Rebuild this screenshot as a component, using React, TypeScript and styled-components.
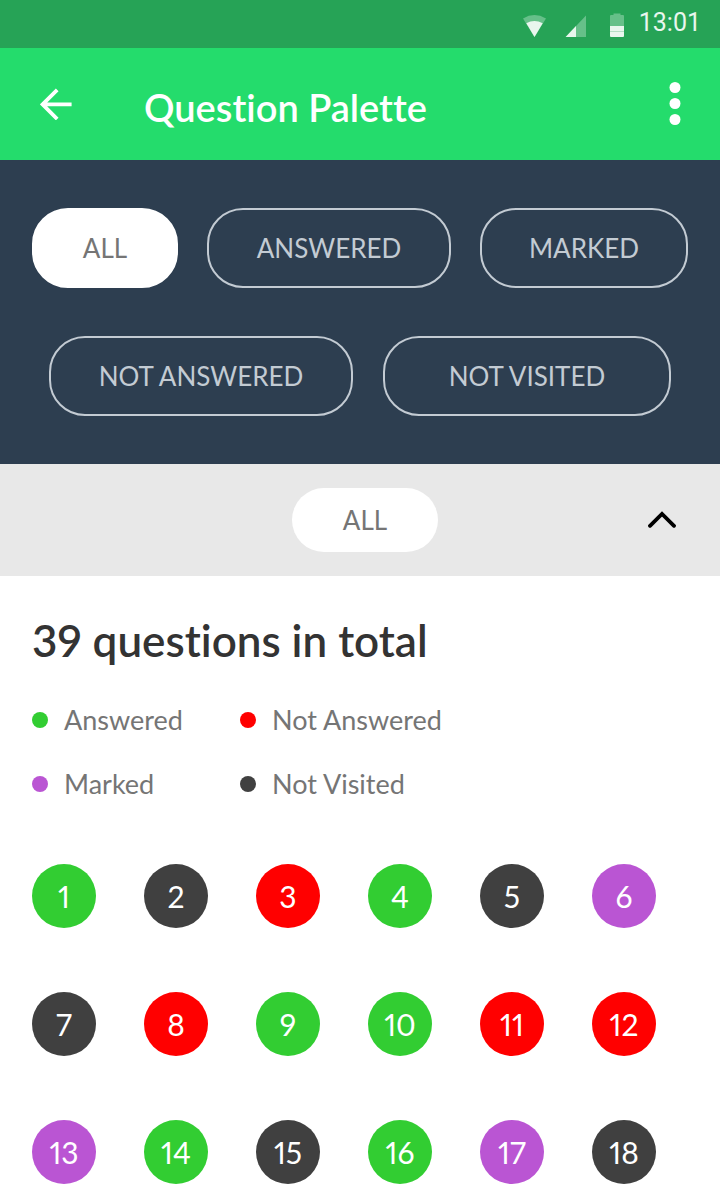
import { useState } from 'react';
import styled, { createGlobalStyle } from 'styled-components';

type Status = 'answered' | 'notAnswered' | 'marked' | 'notVisited';

const statusColor: Record<Status, string> = {
  answered: '#32cd32',
  notAnswered: '#ff0000',
  marked: '#ba55d3',
  notVisited: '#404040',
};

const GlobalStyle = createGlobalStyle`
  *, *::before, *::after { box-sizing: border-box; }
  body {
    margin: 0;
    background: #ffffff;
    font-family: Lato, "Liberation Sans", sans-serif;
    font-variant-ligatures: none;
    font-variant-numeric: proportional-nums;
  }
  button { font-family: inherit; font-variant-numeric: inherit; cursor: pointer; }
`;

const Page = styled.div`
  display: flex;
  flex-direction: column;
  min-height: 100vh;
`;

const StatusBar = styled.div`
  display: flex;
  align-items: center;
  justify-content: flex-end;
  gap: 10px;
  height: 48px;
  padding: 0 19px;
  background: #26a356;
`;

const StatusIcons = styled.div`
  display: flex;
  gap: 17px;
  padding-top: 2px;
`;

const Clock = styled.time`
  padding-bottom: 2px;
  font-family: Roboto, sans-serif;
  font-size: 25px;
  line-height: 28px;
  font-variant-numeric: normal;
  color: #e9f6ee;
`;

const AppBar = styled.header`
  display: flex;
  align-items: center;
  height: 112px;
  padding: 0 21px 0 32px;
  background: #24dc6c;
`;

const IconButton = styled.button`
  display: flex;
  align-items: center;
  justify-content: center;
  width: 48px;
  height: 48px;
  padding: 0;
  border: 0;
  background: none;
`;

const Title = styled.h1`
  flex: 1;
  margin: 0;
  padding: 6px 0 0 64px;
  font-size: 38px;
  line-height: 44px;
  font-weight: 600;
  color: #ffffff;
`;

const Filters = styled.nav`
  display: flex;
  flex-direction: column;
  gap: 48px;
  padding: 48px 32px;
  background: #2d3e50;
`;

const FilterRow = styled.div<{ $centered?: boolean }>`
  display: flex;
  justify-content: ${(p) => (p.$centered ? 'center' : 'space-between')};
  gap: ${(p) => (p.$centered ? 30 : 16)}px;
`;

const FilterPill = styled.button<{ $basis: number; $active: boolean }>`
  flex: 0 1 ${(p) => p.$basis}px;
  height: 80px;
  padding: 0;
  border: 2px solid ${(p) => (p.$active ? '#ffffff' : '#c3cbd3')};
  border-radius: 36px;
  background: ${(p) => (p.$active ? '#ffffff' : 'transparent')};
  color: ${(p) => (p.$active ? '#757575' : '#c3cbd3')};
  font-size: 26px;
  line-height: 32px;
`;

const SelectionBar = styled.div`
  display: grid;
  grid-template-columns: 1fr auto 1fr;
  align-items: center;
  height: 112px;
  padding: 0 34px 0 44px;
  background: #e8e8e8;
`;

const SelectionPill = styled.span`
  grid-column: 2;
  min-width: 146px;
  padding: 16px 24px;
  border-radius: 32px;
  background: #ffffff;
  color: #757575;
  font-size: 26px;
  line-height: 32px;
  text-align: center;
`;

const CollapseButton = styled(IconButton)`
  justify-self: end;
`;

const Content = styled.main`
  padding: 40px 32px 20px;
`;

const Total = styled.h2`
  margin: 0;
  font-size: 44px;
  line-height: 48px;
  font-weight: 600;
  color: #333333;
`;

const Legend = styled.ul`
  display: grid;
  grid-template-columns: 208px auto;
  justify-content: start;
  row-gap: 32px;
  margin: 40px 0 64px;
  padding: 0;
  list-style: none;
`;

const LegendItem = styled.li`
  display: flex;
  align-items: center;
  gap: 16px;
  font-size: 27px;
  line-height: 32px;
  color: #757575;
`;

const Dot = styled.span<{ $status: Status }>`
  width: 16px;
  height: 16px;
  border-radius: 50%;
  background: ${(p) => statusColor[p.$status]};
`;

const QuestionGrid = styled.div`
  display: grid;
  grid-template-columns: repeat(auto-fill, 64px);
  gap: 64px 48px;
`;

const QuestionButton = styled.button<{ $status: Status }>`
  width: 64px;
  height: 64px;
  padding: 0;
  border: 0;
  border-radius: 50%;
  background: ${(p) => statusColor[p.$status]};
  color: #ffffff;
  font-size: 30px;
  line-height: 36px;
`;

const WifiIcon = () => (
  <svg width="24" height="24" viewBox="0 0 24 24" aria-hidden="true">
    <path d="M0 5.4Q11.4-1.2 23 5.4L11.5 24Z" fill="#66c089" />
    <path d="M3.3 10.2Q11.4 5.6 19.7 10.2L11.5 24Z" fill="#e9f6ee" />
  </svg>
);

const SignalIcon = () => (
  <svg width="24" height="24" viewBox="0 0 24 24" aria-hidden="true">
    <path d="M1.6 24L22 2.4V24Z" fill="#66c089" />
    <path d="M1.6 24L12 13V24Z" fill="#e9f6ee" />
  </svg>
);

const BatteryIcon = () => (
  <svg width="24" height="24" viewBox="0 0 24 24" aria-hidden="true">
    <path d="M5 3Q5 2 6 2H8.500V0.500H15.500V2H18Q19 2 19 3V13H5Z" fill="#66c089" />
    <path d="M5 13H19V23Q19 24 18 24H6Q5 24 5 23Z" fill="#e9f6ee" />
    <path d="M5 18.500H19" stroke="#b5dfc5" strokeWidth="1" />
  </svg>
);

const BackIcon = () => (
  <svg width="32" height="32" viewBox="0 0 32 32" fill="none" aria-hidden="true">
    <path d="M17.200 1.800L2.600 16.400L17.200 31M2.600 16.400H31.600" stroke="#ffffff" strokeWidth="3.800" />
  </svg>
);

const MoreIcon = () => (
  <svg width="12" height="44" viewBox="0 0 12 44" fill="#ffffff" aria-hidden="true">
    <circle cx="6" cy="5.500" r="5.500" />
    <circle cx="6" cy="21.500" r="5.500" />
    <circle cx="6" cy="37.500" r="5.500" />
  </svg>
);

const ChevronUpIcon = () => (
  <svg width="28" height="18" viewBox="0 0 28 18" fill="none" aria-hidden="true">
    <path d="M2 14.800L14 3L26 14.800" stroke="#000000" strokeWidth="3.800" strokeLinecap="round" strokeLinejoin="miter" />
  </svg>
);

interface Filter {
  label: string;
  basis: number;
}

const filterRows: Filter[][] = [
  [
    { label: 'ALL', basis: 146 },
    { label: 'ANSWERED', basis: 244 },
    { label: 'MARKED', basis: 208 },
  ],
  [
    { label: 'NOT ANSWERED', basis: 304 },
    { label: 'NOT VISITED', basis: 288 },
  ],
];

const legend: { label: string; status: Status }[] = [
  { label: 'Answered', status: 'answered' },
  { label: 'Not Answered', status: 'notAnswered' },
  { label: 'Marked', status: 'marked' },
  { label: 'Not Visited', status: 'notVisited' },
];

const questions: Status[] = [
  'answered', 'notVisited', 'notAnswered', 'answered', 'notVisited', 'marked',
  'notVisited', 'notAnswered', 'answered', 'answered', 'notAnswered', 'notAnswered',
  'marked', 'answered', 'notVisited', 'answered', 'marked', 'notVisited',
];

export default function App() {
  const [active, setActive] = useState('ALL');

  return (
    <Page>
      <GlobalStyle />
      <StatusBar>
        <StatusIcons>
          <WifiIcon />
          <SignalIcon />
          <BatteryIcon />
        </StatusIcons>
        <Clock>13:01</Clock>
      </StatusBar>
      <AppBar>
        <IconButton aria-label="Back">
          <BackIcon />
        </IconButton>
        <Title>Question Palette</Title>
        <IconButton aria-label="More options">
          <MoreIcon />
        </IconButton>
      </AppBar>
      <Filters aria-label="Question filters">
        {filterRows.map((row, index) => (
          <FilterRow key={index} $centered={index === 1}>
            {row.map(({ label, basis }) => (
              <FilterPill
                key={label}
                $basis={basis}
                $active={label === active}
                aria-pressed={label === active}
                onClick={() => setActive(label)}
              >
                {label}
              </FilterPill>
            ))}
          </FilterRow>
        ))}
      </Filters>
      <SelectionBar>
        <SelectionPill>{active}</SelectionPill>
        <CollapseButton aria-label="Collapse filters">
          <ChevronUpIcon />
        </CollapseButton>
      </SelectionBar>
      <Content>
        <Total>39 questions in total</Total>
        <Legend>
          {legend.map(({ label, status }) => (
            <LegendItem key={label}>
              <Dot $status={status} />
              {label}
            </LegendItem>
          ))}
        </Legend>
        <QuestionGrid>
          {questions.map((status, index) => (
            <QuestionButton key={index} $status={status}>
              {index + 1}
            </QuestionButton>
          ))}
        </QuestionGrid>
      </Content>
    </Page>
  );
}
